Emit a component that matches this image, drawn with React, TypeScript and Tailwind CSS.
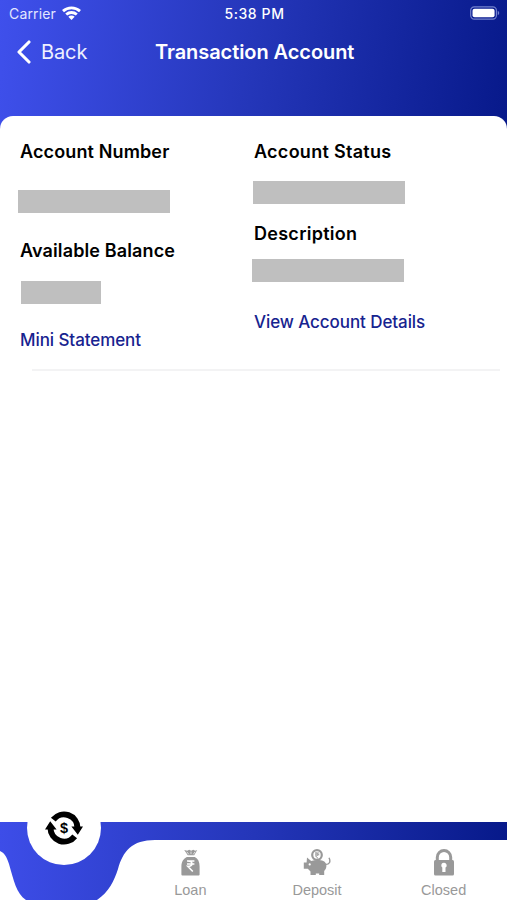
import React from "react";

const heading = "text-[18px] leading-6 font-semibold text-black whitespace-nowrap";
const link = "text-left text-[17px] leading-6 font-medium tracking-[-0.08px] text-[#17238f] whitespace-nowrap";

function StatusBar() {
  return (
    <div className="grid h-[27px] grid-cols-3 items-center pl-[9px] pr-[7px] text-[14px]">
      <div className="flex items-center gap-[6px] text-[#e3e6ff]">
        <span className="tracking-[0.15px]">Carrier</span>
        <svg className="-translate-y-px" width="19" height="14" viewBox="0 0 19 14" fill="none" stroke="white" strokeWidth="2.8">
          <path d="M1 5.1C5.8.7 13.2.7 18 5.1" />
          <path d="M4.2 8.5c3-2.7 7.6-2.7 10.6 0" />
          <path d="M6.3 10.8c1.8-1.6 4.6-1.6 6.4 0l-3.2 3.2z" fill="white" stroke="none" />
        </svg>
      </div>
      <span className="text-center font-medium tracking-[0.6px] text-white">5:38 PM</span>
      <svg className="justify-self-end -translate-y-px" width="30" height="14" viewBox="0 0 31 14">
        <rect x=".7" y=".7" width="26.6" height="12.6" rx="3.7" fill="none" stroke="#7482cd" strokeWidth="1.2" />
        <rect x="2.6" y="2.6" width="22.8" height="8.8" rx="2.2" fill="white" />
        <path d="M28.7 4.8c2 .8 2 3.6 0 4.4z" fill="#7482cd" />
      </svg>
    </div>
  );
}

function Header() {
  return (
    <header className="h-[116px] text-white">
      <StatusBar />
      <div className="grid h-[50px] grid-cols-[155px_1fr] items-center">
        <button className="flex items-center gap-[10px] pl-4 text-[20px]">
          <svg width="15" height="24" viewBox="0 0 15 24" fill="none" stroke="white" strokeWidth="3.1" strokeLinecap="round" strokeLinejoin="round">
            <path d="M13 2 3 12l10 10" />
          </svg>
          <span className="tracking-[-0.1px] text-[#eef0ff]">Back</span>
        </button>
        <h1 className="text-[20px] font-semibold tracking-[-0.07px] whitespace-nowrap">Transaction Account</h1>
      </div>
    </header>
  );
}

function AccountCard() {
  return (
    <section className="grid grid-cols-[234px_1fr] pl-5 pt-6">
      <div className="flex flex-col items-start tracking-[0.13px]">
        <h2 className={heading}>Account Number</h2>
        <div className="-ml-[2px] mt-[26px] h-[23px] w-[152px] bg-[#bfbfbf]" />
        <h2 className={heading + " mt-[26px]"}>Available Balance</h2>
        <div className="ml-px mt-[18px] h-[23px] w-[80px] bg-[#bfbfbf]" />
        <button className={link + " mt-6"}>Mini Statement</button>
      </div>
      <div className="flex flex-col items-start tracking-[0.28px]">
        <h2 className={heading}>Account Status</h2>
        <div className="-ml-px mt-[17px] h-[23px] w-[152px] bg-[#bfbfbf]" />
        <h2 className={heading + " mt-[18px]"}>Description</h2>
        <div className="-ml-[2px] mt-[13px] h-[23px] w-[152px] bg-[#bfbfbf]" />
        <button className={link + " mt-7"}>View Account Details</button>
      </div>
    </section>
  );
}

function ExchangeIcon() {
  return (
    <svg width="38" height="34" viewBox="0 0 38 34">
      <g fill="none" stroke="black" strokeWidth="6">
        <path d="M8.3 8.7A13.5 13.5 0 0 1 32.5 17" />
        <path d="M29.7 25.3A13.5 13.5 0 0 1 5.5 17" />
      </g>
      <path d="M26.4 15.6H38l-5.2 8.2zM0 18.4h11.6L5.2 10.2z" fill="black" />
      <text x="19" y="22.2" textAnchor="middle" fontSize="14.5" fontWeight="700" fontFamily="Liberation Sans, sans-serif">$</text>
    </svg>
  );
}

function LoanIcon() {
  return (
    <svg width="20" height="28" viewBox="0 0 20 28" fill="#999">
      <path d="m4.2 1 3 .8 2-1 2 1 2-1 2 1 2-.8-3 5.2H7.8z" />
      <path d="m6.8 2.8 2 2.6M11 2.6v2.6M15 2.8l-1.7 2.6" stroke="white" strokeWidth=".7" />
      <path d="M6.8 8h8c3.2 1.5 4.8 4.8 4.8 9.5v8q0 1-1 1H2.4q-1 0-1-1v-8C1.4 12.8 3.6 9.5 6.8 8Z" />
      <path d="M7 12h7.4M7 15h7.4M7.8 12c5.4 0 5.7 5.4 0 5.4l5 5.1" fill="none" stroke="white" strokeWidth="1.6" />
    </svg>
  );
}

function DepositIcon() {
  return (
    <svg width="28" height="28" viewBox="0 0 28 28" fill="#999">
      <circle cx="14" cy="6" r="4.8" fill="none" stroke="#999" strokeWidth="2.2" />
      <path d="M12 4h4.3M12 5.8h4.3M12.5 4c3.4 0 3.4 3 0 3l2.6 2.4" fill="none" stroke="#999" strokeWidth="1" />
      <path d="M4 8.5 8.2 12c3.8-1.2 9-1.2 12.1 0 4 1.7 4 7.2.9 10V26h-5v-1.6h-3.4V26H7.5v-3.6L4.8 19.8H.8v-6.3h2.8z" />
      <path d="M22 15.3c4.4.5 6-2.4 4-6.6" fill="none" stroke="#999" strokeWidth="1.4" />
      <circle cx="6.7" cy="15.4" r="1.1" fill="white" />
    </svg>
  );
}

function LockIcon() {
  return (
    <svg width="22" height="28" viewBox="0 0 22 28">
      <path d="M4.3 12V8.2a6.7 6.7 0 0 1 13.4 0V12" fill="none" stroke="#999" strokeWidth="3" />
      <rect x="1" y="11" width="20" height="15.5" rx="1.5" fill="#999" />
      <path d="M8.3 16.5a2.7 2.7 0 1 1 4.2 2.1V23H9.3v-4.4a2.7 2.7 0 0 1-1-2.1Z" fill="white" />
    </svg>
  );
}

function Tab({ label, icon }: { label: string; icon: React.ReactNode }) {
  return (
    <button className="flex flex-col items-center font-['Liberation_Sans',sans-serif] text-[14.5px] leading-4 text-[#999]">
      {icon}
      <span className="mt-[5px]">{label}</span>
    </button>
  );
}

function TabBar() {
  return (
    <footer className="relative h-[78px] bg-linear-to-r from-[#3d4de8] via-[#2436b9] to-[#07198a]">
      <svg className="absolute inset-0" width="507" height="78" viewBox="0 0 507 78" fill="white">
        <path d="M0 29c5 2 7 7 9 13 5 17 7 29 17 36H0Z" />
        <path d="M97 78c12-8 17-19 21-31 5-18 14-29 37-29h352v60Z" />
      </svg>
      <div className="absolute left-[27px] -top-[31px] flex size-[74px] items-center justify-center rounded-full bg-white">
        <ExchangeIcon />
      </div>
      <nav className="relative ml-[127px] grid grid-cols-3 pt-[27px]">
        <Tab label="Loan" icon={<LoanIcon />} />
        <Tab label="Deposit" icon={<DepositIcon />} />
        <Tab label="Closed" icon={<LockIcon />} />
      </nav>
    </footer>
  );
}

export default function App() {
  return (
    <div className="flex h-[900px] w-[507px] flex-col overflow-hidden bg-white font-['Inter',sans-serif]">
      <div className="h-[140px] bg-[linear-gradient(97deg,#3f50ec_0%,#2436b9_50%,#07198a_100%)]">
        <Header />
      </div>
      <main className="-mt-6 flex-1 rounded-t-[13px] bg-white">
        <AccountCard />
        <div className="ml-8 mr-[7px] mt-[17px] h-[2px] bg-[#f3f3f4]" />
      </main>
      <TabBar />
    </div>
  );
}
